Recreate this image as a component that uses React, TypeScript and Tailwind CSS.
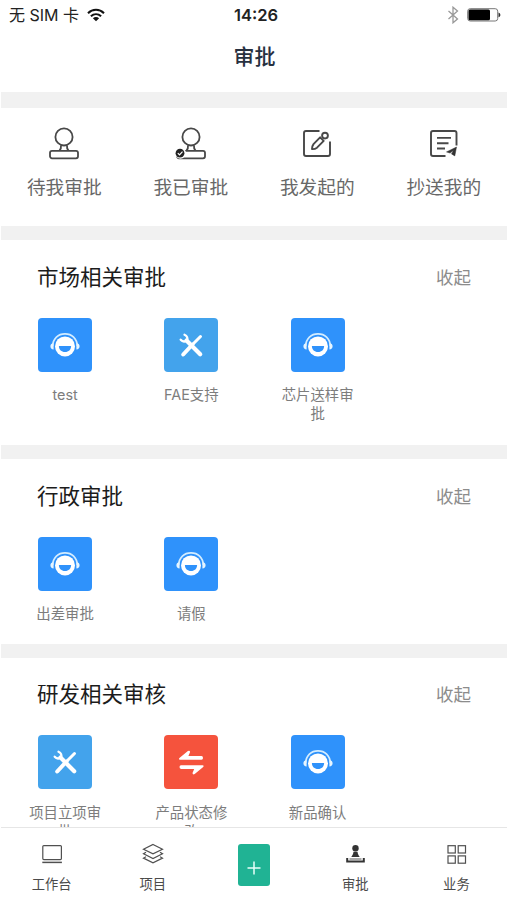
import React from "react";

type AppIcon = "service" | "tools" | "swap";

interface Item {
    label: string;
    icon: AppIcon;
}

interface Section {
    title: string;
    items: Item[];
    className: string;
    labelClassName: string;
}

const sections: Section[] = [
    {
        title: "市场相关审批",
        className: "h-[205px] pt-[23px]",
        labelClassName: "mt-[14px]",
        items: [
            {label: "test", icon: "service"},
            {label: "FAE支持", icon: "tools"},
            {label: "芯片送样审批", icon: "service"},
        ],
    },
    {
        title: "行政审批",
        className: "h-[185px] pt-[23px]",
        labelClassName: "mt-[14px]",
        items: [
            {label: "出差审批", icon: "service"},
            {label: "请假", icon: "service"},
        ],
    },
    {
        title: "研发相关审核",
        className: "h-[205px] pt-[22px]",
        labelClassName: "mt-[15px]",
        items: [
            {label: "项目立项审批", icon: "tools"},
            {label: "产品状态修改", icon: "swap"},
            {label: "新品确认", icon: "service"},
        ],
    },
];

const StampIcon: React.FC<{ checked?: boolean }> = ({checked}) => (
    <svg width="34" height="34" viewBox="0 0 34 34" fill="none" stroke="#484848" strokeWidth="1.8">
        <circle cx="17" cy="9.900" r="8.600"/>
        <path d="M14 18.500c.3 2.200-.3 3.600-1.500 5M20 18.500c-.3 2.200.3 3.600 1.500 5"/>
        <rect x="3" y="23.800" width="28" height="7.500" rx="2"/>
        {checked && (
            <>
                <circle cx="6.500" cy="26.200" r="5.500" fill="#fff" stroke="none"/>
                <circle cx="6" cy="26.200" r="4.400" fill="#222" stroke="none"/>
                <path d="M3.800 26.100l1.700 1.700 3-3.200" stroke="#fff" strokeWidth="1.200"/>
            </>
        )}
    </svg>
);

const EditIcon = () => (
    <svg width="34" height="34" viewBox="0 0 34 34" fill="none" stroke="#484848" strokeWidth="1.900" strokeLinejoin="round">
        <path d="M19.500 4H6a2 2 0 0 0-2 2v21a2 2 0 0 0 2 2h22a2 2 0 0 0 2-2V14.500"/>
        <circle cx="25" cy="8.600" r="2.900"/>
        <path d="M20.100 10.300l3.600 3.600-6.700 6.800c-1.300 1-3.300 1.500-5 1.400 0-1.800.5-3.700 1.500-5z"/>
    </svg>
);

const CopyIcon = () => (
    <svg width="34" height="34" viewBox="0 0 34 34" fill="none" stroke="#484848" strokeWidth="1.900">
        <path d="M18.500 29H6a2 2 0 0 1-2-2V6a2 2 0 0 1 2-2h21.500a2 2 0 0 1 2 2v12.500"/>
        <path d="M10 10.900h14M10 16.200h11.500M10 21.500h8"/>
        <path d="M29.500 20l-10 4.900 3.600 1.200 3.400-2.800-2 3.600 3.300 2z" fill="#333" stroke="#333" strokeWidth=".5"/>
    </svg>
);

const ServiceIcon = () => (
    <svg width="54" height="54" viewBox="0 0 54 54" fill="none">
        <circle cx="27" cy="28.400" r="10" fill="#fff"/>
        <path d="M14.600 28C15.200 20.500 20 15.900 27 15.900S38.800 20.500 39.400 28" stroke="#d4edff" strokeWidth="1.700"/>
        <path d="M15.600 25.200v6.200c-2 0-3.200-1.100-3.200-3.100s1.200-3.100 3.200-3.100zM38.400 25.200v6.200c2 0 3.200-1.100 3.200-3.100s-1.200-3.100-3.200-3.100z" fill="#e6f5ff"/>
        <path d="M20.900 28h12.200c0 3.800-2.500 6-6.100 6s-6.100-2.200-6.100-6z" fill="#2f92fb"/>
    </svg>
);

const ToolsIcon = () => (
    <svg width="54" height="54" viewBox="0 0 54 54" fill="none" stroke="#fff" strokeLinecap="round">
        <path d="M36.500 18.500l-7.200 7.300" strokeWidth="3"/>
        <path d="M28.500 26.500l-9.300 10" strokeWidth="4"/>
        <path d="M22.500 22.500L36.200 36.200" strokeWidth="4.200"/>
        <path d="M20.500 16.700c2.600 1 3.500 3.500 2.500 5.500-1.600 1.900-4.300 1.700-6.300-.5" strokeWidth="2.300"/>
    </svg>
);

const SwapIcon = () => (
    <svg width="54" height="54" viewBox="0 0 54 54" fill="#fff">
        <path d="M16 24.700q-2-.6-.3-2l8.200-6.600q2-1 2.200 1l-1.700 4H37.500q1.500.1 1.500 1.800t-1.500 1.800z"/>
        <path d="M38.600 30.300q2 .6.300 2l-8.200 6.800q-2 1-2.200-1l1.700-4.200H17q-1.500-.1-1.500-1.800t1.500-1.800z"/>
    </svg>
);

const iconBoxes: Record<AppIcon, { icon: React.ReactNode; className: string }> = {
    service: {icon: <ServiceIcon/>, className: "bg-[#2f92fb]"},
    tools: {icon: <ToolsIcon/>, className: "bg-[#43a3ec]"},
    swap: {icon: <SwapIcon/>, className: "bg-[#f5533d]"},
};

const shortcuts = [
    {label: "待我审批", icon: <StampIcon/>},
    {label: "我已审批", icon: <StampIcon checked/>},
    {label: "我发起的", icon: <EditIcon/>},
    {label: "抄送我的", icon: <CopyIcon/>},
];

const StatusBar = () => (
    <div className="grid h-[30px] grid-cols-3 items-center pr-[6px] pl-[8px] text-[#222]">
        <div className="flex items-center gap-[8px]">
            <span className="font-['Inter','Noto_Sans_CJK_SC',sans-serif] text-[16px] whitespace-pre">无 SIM 卡</span>
            <svg width="18" height="14" viewBox="0 0 18 14" fill="none" stroke="#111" strokeWidth="2">
                <path d="M1 5.200c4.500-4.500 11.500-4.500 16 0M3.900 8.300c3-2.900 7.200-2.900 10.200 0"/>
                <path d="M5.900 10.200c1.900-1.700 4.300-1.700 6.200 0L9 13.300z" fill="#111" stroke="none"/>
            </svg>
        </div>
        <div className="pl-[2px] text-center font-['Inter'] text-[16.500px] font-semibold">14:26</div>
        <div className="flex items-center justify-end gap-[8px]">
            <svg width="12" height="18" viewBox="0 0 12 18" fill="none" stroke="#999" strokeWidth="1.300">
                <path d="M1.500 5l9 8L6 16.800V1.200L10.500 5l-9 8"/>
            </svg>
            <svg width="34" height="14" viewBox="0 0 34 14">
                <rect x=".7" y=".7" width="30" height="12.300" rx="2.500" fill="#fff" stroke="#777" strokeWidth="1"/>
                <rect x="1.500" y="1.500" width="21.500" height="10.700" rx="1.500" fill="#000"/>
                <path d="M31.500 4.500c2.500.8 2.500 4 0 4.800z" fill="#333"/>
            </svg>
        </div>
    </div>
);

const SectionCard: React.FC<{ section: Section }> = ({section}) => (
    <section className={`shrink-0 bg-white ${section.className}`}>
        <div className="flex h-[30px] items-center justify-between pr-[36px] pl-[36px]">
            <h2 className="text-[21.500px] text-[#1c1c1c]">{section.title}</h2>
            <button className="text-[17.500px] text-[#8c8c8c]">收起</button>
        </div>
        <div className="mt-[25px] grid grid-cols-4 pl-px">
            {section.items.map((item) => (
                <div key={item.label} className="flex flex-col items-center">
                    <div className={`size-[54px] rounded-[4px] ${iconBoxes[item.icon].className}`}>
                        {iconBoxes[item.icon].icon}
                    </div>
                    <div
                        className={`w-[76px] text-center font-['Inter','Noto_Sans_CJK_SC',sans-serif] text-[14.400px] leading-[18.500px] text-[#7d7d7d] ${section.labelClassName}`}
                    >
                        {item.label}
                    </div>
                </div>
            ))}
        </div>
    </section>
);

const Tab: React.FC<{ label: string; children: React.ReactNode }> = ({label, children}) => (
    <div className="flex flex-col items-center pt-[14px] text-[13.300px] leading-[18px] text-[#4a4a4a]">
        <svg width="24" height="24" viewBox="0 0 24 24" fill="none" stroke="#505050" strokeWidth="1.200">
            {children}
        </svg>
        <span className="mt-[10px]">{label}</span>
    </div>
);

const TabBar = () => (
    <nav className="grid h-[73px] shrink-0 grid-cols-5 border-t border-[#e6e6e6] bg-white">
        <Tab label="工作台">
            <rect x="2.800" y="3.600" width="18.600" height="14" rx="1"/>
            <path d="M2.300 20.400h19.600" strokeWidth="1.500"/>
        </Tab>
        <Tab label="项目">
            <path d="M12 2.500l9.500 4.700-9.500 4.700-9.500-4.700z"/>
            <path d="M5 10.300l-2.500 1.500 9.500 4.700 9.500-4.700-2.500-1.500M5 14.700l-2.500 1.400 9.500 4.700 9.500-4.700-2.500-1.400"/>
        </Tab>
        <div className="flex justify-center pt-[16px] pl-px">
            <div className="flex h-[42px] w-[32px] items-center justify-center rounded-[3px] bg-[#20b394]">
                <svg width="14" height="14" viewBox="0 0 14 14" stroke="#e8fff9" strokeWidth="1.500" className="mt-[5px]">
                    <path d="M7 .5v13M.5 7h13"/>
                </svg>
            </div>
        </div>
        <Tab label="审批">
            <circle cx="12.500" cy="6.200" r="3.200" fill="#333" stroke="none"/>
            <path d="M10.500 9.700h4c.3 2.500 1.200 3.800 2.300 5.300H8.200C9.300 13.500 10.200 12.200 10.500 9.700z" fill="#333" stroke="none"/>
            <path d="M4.200 16v3.500h16.600V16" stroke="#333" strokeWidth="2"/>
            <path d="M6.500 17h12" stroke="#555" strokeWidth="1"/>
        </Tab>
        <Tab label="业务">
            <rect x="4" y="3.700" width="7.300" height="7.300"/>
            <rect x="14.200" y="3.700" width="7.300" height="7.300"/>
            <rect x="4" y="13.900" width="7.300" height="7.300"/>
            <rect x="14.200" y="13.900" width="7.300" height="7.300"/>
        </Tab>
    </nav>
);

export default function App() {
    return (
        <div className="flex h-screen flex-col overflow-hidden bg-white pl-px font-['Liberation_Sans','Noto_Sans_CJK_SC',sans-serif]">
            <header className="h-[92px] shrink-0">
                <StatusBar/>
                <h1 className="pt-[11px] pl-px text-center text-[21px] leading-[32px] font-medium text-[#27303f]">审批</h1>
            </header>
            <main className="flex min-h-0 flex-1 flex-col gap-[14px] overflow-hidden bg-[#f1f1f1] pt-[16px]">
                <div className="grid h-[118px] shrink-0 grid-cols-4 bg-white pt-[19px]">
                    {shortcuts.map((shortcut) => (
                        <div key={shortcut.label} className="flex flex-col items-center">
                            {shortcut.icon}
                            <span className="mt-[13px] text-[18.700px] leading-[28px] text-[#686868]">
                                {shortcut.label}
                            </span>
                        </div>
                    ))}
                </div>
                {sections.map((section) => (
                    <SectionCard key={section.title} section={section}/>
                ))}
            </main>
            <TabBar/>
        </div>
    );
}
